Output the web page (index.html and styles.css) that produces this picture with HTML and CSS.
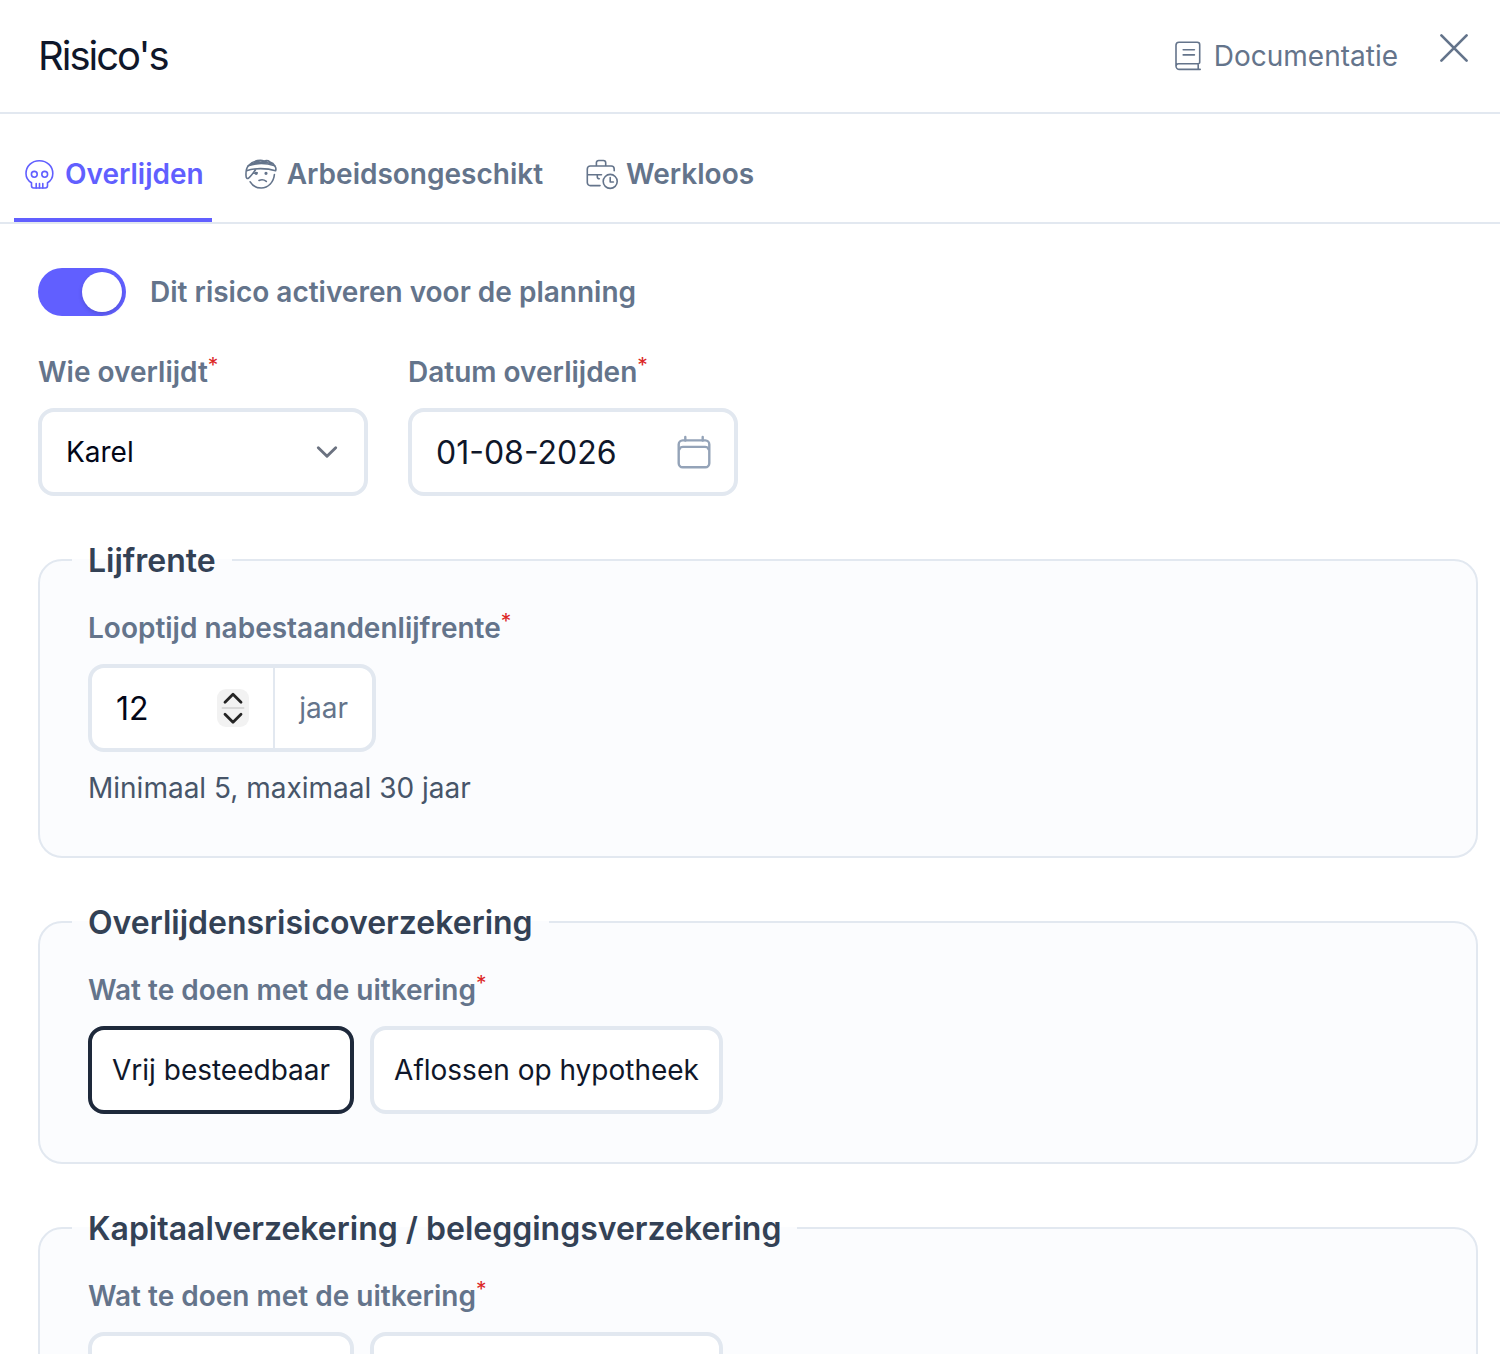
FILE: index.html
```html
<!DOCTYPE html>
<html lang="nl">
<head>
  <meta charset="UTF-8">
  <meta name="viewport" content="width=device-width, initial-scale=1.0">
  <title>Risico's</title>
  <link rel="stylesheet" href="styles.css">
</head>
<body>
  <header class="header">
    <h1>Risico's</h1>
    <div class="header-actions">
      <a class="doc-link" href="#">
        <svg width="28" height="32" viewBox="0 0 28 32" fill="none" stroke="currentColor" stroke-width="1.6" stroke-linecap="round" stroke-linejoin="round">
          <path d="M26.2 29.4H5.4a3.4 3.4 0 0 1-3.4-3.4V5.2a3 3 0 0 1 3-3h18.2a2.5 2.5 0 0 1 2.5 2.500v17.500a1.500 1.500 0 0 1-1.500 1.500H4.500a2.500 2.500 0 0 0-2.500 2.500M24.200 23.800v5.400M9.200 9.800h11.200M9.200 14.900h11.200"/>
        </svg>
        <span>Documentatie</span>
      </a>
      <button type="button" class="close-btn" aria-label="Sluiten">
        <svg width="32" height="32" viewBox="0 0 32 32" fill="none" stroke="currentColor" stroke-width="2.7" stroke-linecap="round">
          <path d="M3.400 3.400l25.200 25.200M28.600 3.400L3.400 28.600"/>
        </svg>
      </button>
    </div>
  </header>

  <nav class="tabs">
    <a class="tab active" href="#">
      <svg width="32" height="32" viewBox="0 0 32 32" fill="none" stroke="currentColor" stroke-width="1.6" stroke-linecap="round" stroke-linejoin="round">
        <path d="M16.300 2.700C8.700 2.700 3 8.100 3 15.500c0 4.300 2.100 7.300 5.500 9.200v3.100c0 1.400.8 2.200 2.100 2.200h11.800c1.300 0 2.100-.8 2.100-2.200v-3.100c3.400-1.900 5.300-4.900 5.300-9.200 0-7.400-5.700-12.800-13.500-12.800z"/>
        <path d="M13.200 25.500V30M16.500 25.500V30M19.800 25.500V30"/>
        <circle cx="11.300" cy="16.300" r="2.900"/>
        <circle cx="21.700" cy="16.300" r="2.900"/>
      </svg>
      <span>Overlijden</span>
    </a>
    <a class="tab" href="#">
      <svg width="32" height="32" viewBox="0 0 32 32" fill="none" stroke="currentColor" stroke-width="1.6" stroke-linecap="round" stroke-linejoin="round">
        <path d="M1.500 12.800C9 9.800 22 10 30.600 12.800c.6-1.500.3-3.500-.9-5.100-8-2.700-18.500-2.700-26.400 0C1.500 9.800.8 13 1 17.500c0 2.500 1.200 3.700 2.600 2.600 2.600-2.100 4.800-5.200 7.200-8.900"/>
        <path d="M3.300 7.700C6.500 4.400 10.500 2.500 15.500 2.400c1.500 0 2.700.3 3.500.6 2.500-.7 4.500-.3 5.900.9 2.300.6 4 2 4.800 3.800M5.500 5.900C12 5.900 17 4.900 21.600 2.800M9.500 4.200c6.800-.7 12-.2 18.500 1.700"/>
        <path d="M29.400 16.500c-.6 7.300-6 13.500-13.200 13.500-4.800 0-8.700-2.300-11-6.200"/>
        <path d="M14 22.500c2.600-1.300 5-1 7.300.9M8.800 15.200l3.300-.4"/>
        <circle cx="11.200" cy="15.300" r=".8" fill="currentColor"/>
        <circle cx="21" cy="15.300" r=".8" fill="currentColor"/>
      </svg>
      <span>Arbeidsongeschikt</span>
    </a>
    <a class="tab" href="#">
      <svg class="icon-wide" width="34" height="32" viewBox="-2 0 34 32" fill="none" stroke="currentColor" stroke-width="1.6" stroke-linecap="round" stroke-linejoin="round">
        <path d="M28.200 12.800V11a3 3 0 0 0-3-3H4.300a3 3 0 0 0-3 3v13.600a3 3 0 0 0 3 3h9.700M10.400 8V4.800a2.300 2.300 0 0 1 2.300-2.300h4.700a2.300 2.300 0 0 1 2.300 2.300V8M1.300 16.800h14.200M11.300 16.800v1.900a2 2 0 0 0 2 2"/>
        <circle cx="24.200" cy="23.400" r="7"/>
        <path d="M24.200 19.600v4.400h3.200"/>
      </svg>
      <span>Werkloos</span>
    </a>
  </nav>

  <form class="content">
    <div class="toggle-row">
      <button type="button" class="toggle" role="switch" aria-checked="true" aria-labelledby="toggle-label"><span class="toggle-knob"></span></button>
      <span class="toggle-label" id="toggle-label">Dit risico activeren voor de planning</span>
    </div>

    <div class="form-row">
      <div class="field">
        <div class="label">Wie overlijdt<span class="required">*</span></div>
        <div class="control">
          <span>Karel</span>
          <svg class="chevron" width="24" height="24" viewBox="0 0 24 24" fill="none" stroke="currentColor" stroke-width="2.9" stroke-linecap="round" stroke-linejoin="round">
            <path d="M3.300 7.700l8.700 8.600 8.700-8.600"/>
          </svg>
        </div>
      </div>
      <div class="field">
        <div class="label">Datum overlijden<span class="required">*</span></div>
        <div class="control date">
          <span>01-08-2026</span>
          <svg class="calendar" width="36" height="36" viewBox="0 0 36 36" fill="none" stroke="currentColor" stroke-width="2.4" stroke-linecap="round">
            <rect x="2.700" y="6.400" width="30.600" height="26.800" rx="4"/>
            <path d="M9.300 2.900v3.600M26.700 2.900v3.600M3.500 15c.5-1.500 1.600-2.100 3.500-2.100h22c1.900 0 3 .6 3.500 2.100"/>
          </svg>
        </div>
      </div>
    </div>

    <fieldset class="group">
      <legend>Lijfrente</legend>
      <div class="label">Looptijd nabestaandenlijfrente<span class="required">*</span></div>
      <div class="number-control">
        <div class="number-value">
          <span>12</span>
          <svg class="stepper" width="32" height="38" viewBox="0 0 32 38" fill="none" stroke-linecap="round" stroke-linejoin="round">
            <rect width="32" height="38" rx="9" fill="#f2f2f2"/>
            <path d="M5.500 19h21" stroke="#d9d9d9" stroke-width="1.8"/>
            <path d="M8 13.200l8-8 8 8M8 25.300l8 8 8-8" stroke="#242424" stroke-width="2.8"/>
          </svg>
        </div>
        <div class="unit">jaar</div>
      </div>
      <p class="help">Minimaal 5, maximaal 30 jaar</p>
    </fieldset>

    <fieldset class="group">
      <legend>Overlijdensrisicoverzekering</legend>
      <div class="label">Wat te doen met de uitkering<span class="required">*</span></div>
      <div class="options">
        <button type="button" class="option selected">Vrij besteedbaar</button>
        <button type="button" class="option">Aflossen op hypotheek</button>
      </div>
    </fieldset>

    <fieldset class="group">
      <legend>Kapitaalverzekering / beleggingsverzekering</legend>
      <div class="label">Wat te doen met de uitkering<span class="required">*</span></div>
      <div class="options">
        <button type="button" class="option">Vrij besteedbaar</button>
        <button type="button" class="option">Aflossen op hypotheek</button>
      </div>
    </fieldset>
  </form>
</body>
</html>
```

FILE: styles.css
```css
* {
  margin: 0;
  padding: 0;
  box-sizing: border-box;
}

body {
  font-family: Inter, sans-serif;
  font-size: 28px;
  line-height: 40px;
  color: #0f172a;
  background-color: #ffffff;
  height: 100vh;
  overflow: hidden;
}

svg {
  display: block;
  flex-shrink: 0;
}

button {
  font: inherit;
  letter-spacing: inherit;
  color: inherit;
  cursor: pointer;
}

a {
  text-decoration: none;
}

/* Header */
.header {
  display: flex;
  justify-content: space-between;
  height: 114px;
  padding: 0 30px 0 38px;
  border-bottom: 2px solid #e2e8f0;
}

h1 {
  font-size: 40px;
  font-weight: 400;
  line-height: 112px;
  letter-spacing: -2px;
}

.header-actions {
  display: flex;
  gap: 40px;
}

.doc-link {
  display: flex;
  align-items: center;
  gap: 12px;
  color: #64748b;
}

.close-btn {
  height: 96px;
  background: none;
  border: none;
  color: #64748b;
}

/* Tabs */
.tabs {
  display: flex;
  gap: 24px;
  height: 110px;
  padding: 0 14px;
  border-bottom: 2px solid #e2e8f0;
}

.tab {
  display: flex;
  align-items: center;
  gap: 10px;
  padding: 20px 8px 4px 9px;
  color: #64748b;
  font-weight: 600;
  border-bottom: 4px solid transparent;
}

.tab.active {
  color: #615fff;
  border-bottom-color: #615fff;
}

.icon-wide {
  margin-right: -2px;
}

/* Form */
.content {
  padding: 44px 22px 0 38px;
}

.toggle-row {
  display: flex;
  align-items: center;
  gap: 24px;
  margin-bottom: 36px;
}

.toggle {
  display: flex;
  justify-content: flex-end;
  width: 88px;
  height: 48px;
  padding: 4px;
  border: none;
  border-radius: 24px;
  background-color: #615fff;
}

.toggle-knob {
  width: 40px;
  height: 40px;
  border-radius: 50%;
  background-color: #ffffff;
  box-shadow: 0 2px 4px rgba(0, 0, 0, 0.15);
}

.toggle-label,
.label {
  font-weight: 600;
  color: #64748b;
}

.label {
  display: flex;
  height: 40px;
  margin-bottom: 16px;
}

.required {
  font-size: 21px;
  font-weight: 400;
  line-height: 28px;
  color: #dc2626;
}

.form-row {
  display: flex;
  gap: 40px;
}

.field {
  width: 330px;
}

.control {
  display: flex;
  align-items: center;
  justify-content: space-between;
  height: 88px;
  padding: 0 24px;
  border: 4px solid #e2e8f0;
  border-radius: 16px;
  color: #020617;
  background-color: #ffffff;
}

.date {
  font-size: 32px;
  line-height: 42px;
  color: #0f172a;
}

.date span,
.number-value span {
  padding-top: 2px;
}

.chevron {
  margin-right: 1px;
  color: #6b7280;
}

.calendar {
  margin-right: -2px;
  color: #94a3b8;
}

.group {
  margin-top: 44px;
  padding: 28px 48px 48px;
  border: 2px solid #e2e8f0;
  border-radius: 24px;
  background-color: #fbfcfe;
}

legend {
  margin-left: -16px;
  padding: 2px 16px 0;
  font-size: 32px;
  font-weight: 600;
  line-height: 38px;
  color: #334155;
}

.number-control {
  display: flex;
  width: 288px;
  height: 88px;
  border: 4px solid #e2e8f0;
  border-radius: 16px;
  background-color: #ffffff;
}

.number-value {
  display: flex;
  flex: 1;
  align-items: center;
  justify-content: space-between;
  padding: 0 24px;
  font-size: 32px;
  color: #020617;
}

.unit {
  display: flex;
  align-items: center;
  padding: 0 24px;
  color: #64748b;
  border-left: 2px solid #e2e8f0;
}

.help {
  margin-top: 16px;
  color: #475569;
}

.options {
  display: flex;
  gap: 16px;
}

.option {
  height: 88px;
  padding: 0 20px;
  border: 4px solid #e2e8f0;
  border-radius: 16px;
  background-color: #ffffff;
}

.option.selected {
  border-color: #1e293b;
}
```
